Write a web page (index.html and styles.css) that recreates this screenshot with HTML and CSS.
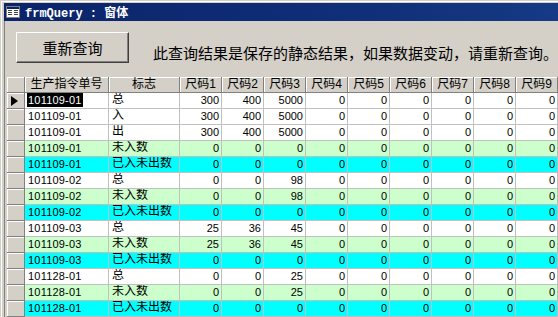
FILE: index.html
```html
<!DOCTYPE html>
<html>
<head>
<meta charset="utf-8">
<link rel="stylesheet" href="styles.css">
</head>
<body>
<div class="window">
  <div class="frame">
    <div class="titlebar">
      <svg class="ticon" width="14" height="12" viewBox="0 0 14 12">
        <rect x="0.5" y="0.5" width="13" height="11" fill="#ffffff" stroke="#808080"/>
        <rect x="1" y="1" width="12" height="2" fill="#0A246A"/>
        <rect x="2" y="4" width="4" height="1" fill="#404040"/>
        <rect x="2" y="6" width="4" height="1" fill="#404040"/>
        <rect x="2" y="8" width="4" height="1" fill="#404040"/>
        <rect x="8" y="4" width="4" height="1" fill="#404040"/>
        <rect x="8" y="6" width="4" height="1" fill="#404040"/>
        <rect x="8" y="8" width="4" height="1" fill="#404040"/>
      </svg>
      <span class="title">frmQuery : 窗体</span>
    </div>
    <div class="client">
      <div class="toolbar">
        <button class="btn">重新查询</button>
        <span class="msg">此查询结果是保存的静态结果，如果数据变动，请重新查询。</span>
      </div>
      <div class="grid">
        <div class="row head">
          <div class="h"></div><div class="h">生产指令单号</div><div class="h">标志</div>
          <div class="h">尺码1</div><div class="h">尺码2</div><div class="h">尺码3</div><div class="h">尺码4</div><div class="h">尺码5</div><div class="h">尺码6</div><div class="h">尺码7</div><div class="h">尺码8</div><div class="h">尺码9</div>
        </div>
        <div class="row">
          <div class="s"><svg width="7" height="10" viewBox="0 0 7 10"><polygon points="0,0 7,5 0,10" fill="#000"/></svg></div>
          <div class="c"><span class="hl">101109-01</span></div><div class="c t">总</div>
          <div class="c n">300</div><div class="c n">400</div><div class="c n">5000</div><div class="c n">0</div><div class="c n">0</div><div class="c n">0</div><div class="c n">0</div><div class="c n">0</div><div class="c n">0</div>
        </div>
        <div class="row">
          <div class="s"></div><div class="c">101109-01</div><div class="c t">入</div>
          <div class="c n">300</div><div class="c n">400</div><div class="c n">5000</div><div class="c n">0</div><div class="c n">0</div><div class="c n">0</div><div class="c n">0</div><div class="c n">0</div><div class="c n">0</div>
        </div>
        <div class="row">
          <div class="s"></div><div class="c">101109-01</div><div class="c t">出</div>
          <div class="c n">300</div><div class="c n">400</div><div class="c n">5000</div><div class="c n">0</div><div class="c n">0</div><div class="c n">0</div><div class="c n">0</div><div class="c n">0</div><div class="c n">0</div>
        </div>
        <div class="row green">
          <div class="s"></div><div class="c">101109-01</div><div class="c t">未入数</div>
          <div class="c n">0</div><div class="c n">0</div><div class="c n">0</div><div class="c n">0</div><div class="c n">0</div><div class="c n">0</div><div class="c n">0</div><div class="c n">0</div><div class="c n">0</div>
        </div>
        <div class="row cyan">
          <div class="s"></div><div class="c">101109-01</div><div class="c t">已入未出数</div>
          <div class="c n">0</div><div class="c n">0</div><div class="c n">0</div><div class="c n">0</div><div class="c n">0</div><div class="c n">0</div><div class="c n">0</div><div class="c n">0</div><div class="c n">0</div>
        </div>
        <div class="row">
          <div class="s"></div><div class="c">101109-02</div><div class="c t">总</div>
          <div class="c n">0</div><div class="c n">0</div><div class="c n">98</div><div class="c n">0</div><div class="c n">0</div><div class="c n">0</div><div class="c n">0</div><div class="c n">0</div><div class="c n">0</div>
        </div>
        <div class="row green">
          <div class="s"></div><div class="c">101109-02</div><div class="c t">未入数</div>
          <div class="c n">0</div><div class="c n">0</div><div class="c n">98</div><div class="c n">0</div><div class="c n">0</div><div class="c n">0</div><div class="c n">0</div><div class="c n">0</div><div class="c n">0</div>
        </div>
        <div class="row cyan">
          <div class="s"></div><div class="c">101109-02</div><div class="c t">已入未出数</div>
          <div class="c n">0</div><div class="c n">0</div><div class="c n">0</div><div class="c n">0</div><div class="c n">0</div><div class="c n">0</div><div class="c n">0</div><div class="c n">0</div><div class="c n">0</div>
        </div>
        <div class="row">
          <div class="s"></div><div class="c">101109-03</div><div class="c t">总</div>
          <div class="c n">25</div><div class="c n">36</div><div class="c n">45</div><div class="c n">0</div><div class="c n">0</div><div class="c n">0</div><div class="c n">0</div><div class="c n">0</div><div class="c n">0</div>
        </div>
        <div class="row green">
          <div class="s"></div><div class="c">101109-03</div><div class="c t">未入数</div>
          <div class="c n">25</div><div class="c n">36</div><div class="c n">45</div><div class="c n">0</div><div class="c n">0</div><div class="c n">0</div><div class="c n">0</div><div class="c n">0</div><div class="c n">0</div>
        </div>
        <div class="row cyan">
          <div class="s"></div><div class="c">101109-03</div><div class="c t">已入未出数</div>
          <div class="c n">0</div><div class="c n">0</div><div class="c n">0</div><div class="c n">0</div><div class="c n">0</div><div class="c n">0</div><div class="c n">0</div><div class="c n">0</div><div class="c n">0</div>
        </div>
        <div class="row">
          <div class="s"></div><div class="c">101128-01</div><div class="c t">总</div>
          <div class="c n">0</div><div class="c n">0</div><div class="c n">25</div><div class="c n">0</div><div class="c n">0</div><div class="c n">0</div><div class="c n">0</div><div class="c n">0</div><div class="c n">0</div>
        </div>
        <div class="row green">
          <div class="s"></div><div class="c">101128-01</div><div class="c t">未入数</div>
          <div class="c n">0</div><div class="c n">0</div><div class="c n">25</div><div class="c n">0</div><div class="c n">0</div><div class="c n">0</div><div class="c n">0</div><div class="c n">0</div><div class="c n">0</div>
        </div>
        <div class="row cyan">
          <div class="s"></div><div class="c">101128-01</div><div class="c t">已入未出数</div>
          <div class="c n">0</div><div class="c n">0</div><div class="c n">0</div><div class="c n">0</div><div class="c n">0</div><div class="c n">0</div><div class="c n">0</div><div class="c n">0</div><div class="c n">0</div>
        </div>
      </div>
    </div>
  </div>
</div>
</body>
</html>
```
FILE: styles.css
```css
html, body {
  margin: 0;
  padding: 0;
  background: #D4D0C8;
  width: 558px;
  height: 317px;
  overflow: hidden;
}
body {
  font-family: "Liberation Sans", "Noto Sans CJK SC", sans-serif;
  font-size: 12px;
  color: #000;
}
.window {
  border-top: 1px solid #D4D0C8;
  border-left: 1px solid #D4D0C8;
  height: 316px;
}
.frame {
  border-top: 1px solid #ffffff;
  border-left: 1px solid #ffffff;
  padding: 1px 0 0 2px;
  height: 314px;
}
.titlebar {
  height: 18px;
  background: linear-gradient(to right, #0A246A, #10307A 70%, #163A86);
  display: flex;
  align-items: center;
  color: #fff;
}
.ticon {
  margin-left: 2px;
  margin-right: 5px;
  flex: none;
}
.title {
  font-family: "Liberation Mono", "Noto Sans CJK SC", monospace;
  font-weight: bold;
  font-size: 12px;
  white-space: pre;
}
.client {
  border-left: 1px solid #808080;
  padding-left: 2px;
  height: 296px;
}
.toolbar {
  height: 56px;
  display: flex;
  align-items: flex-start;
}
.btn {
  margin: 11px 0 0 9px;
  width: 113px;
  height: 31px;
  background: #D4D0C8;
  border: 1px solid;
  border-color: #ffffff #404040 #404040 #ffffff;
  box-shadow: inset -1px -1px 0 #808080;
  font-family: "Noto Sans CJK SC", sans-serif;
  font-size: 15px;
  color: #000;
  padding: 0;
  line-height: 18px;
}
.msg {
  margin: 23px 0 0 24px;
  font-family: "Noto Sans CJK SC", sans-serif;
  font-size: 15px;
  line-height: 18px;
  white-space: nowrap;
}
.grid {
  display: flex;
  flex-direction: column;
}
.row {
  display: grid;
  grid-template-columns: 18px 84px 71px repeat(9, 42px);
  height: 16px;
  background: #ffffff;
}
.row.green { background: #CCFFCC; }
.row.cyan { background: #00FFFF; }
.row > div {
  box-sizing: border-box;
  height: 16px;
  line-height: 15px;
  white-space: nowrap;
  overflow: hidden;
}
.c {
  border-right: 1px solid #C0C0C0;
  border-bottom: 1px solid #C0C0C0;
  padding: 0 2px 0 3px;
  font-size: 11px;
  letter-spacing: 0.2px;
}
.row > .c.t {
  font-size: 12px;
  letter-spacing: 0;
  line-height: 13px;
}
.c.n { text-align: right; letter-spacing: 0; }
.hl {
  background: #000;
  color: #fff;
  display: inline-block;
  line-height: 14px;
  padding: 0 1px;
  margin-left: -1px;
}
.s {
  background: #D4D0C8;
  border-right: 1px solid #808080;
  border-bottom: 1px solid #808080;
  box-shadow: inset 1px 1px 0 #ffffff;
  display: flex;
  align-items: center;
  padding-left: 4px;
}
.head {
  background: #D4D0C8;
}
.h {
  background: #D4D0C8;
  border-right: 1px solid #808080;
  border-bottom: 1px solid #808080;
  box-shadow: inset 1px 1px 0 #ffffff;
  text-align: center;
  font-size: 12px;
}
```
